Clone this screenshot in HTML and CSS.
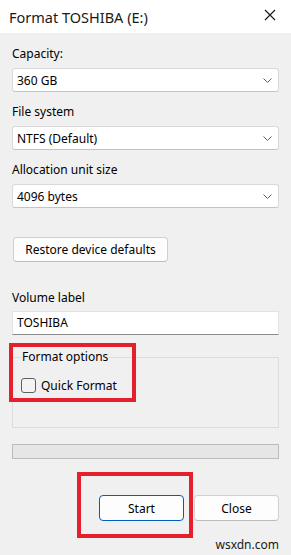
FILE: index.html
```html
<!DOCTYPE html>
<html lang="en">
<head>
    <meta charset="UTF-8">
    <meta name="viewport" content="width=device-width, initial-scale=1.0">
    <title>Format TOSHIBA (E:)</title>
    <link rel="stylesheet" href="styles.css">
</head>
<body>
    <div class="dialog">
        <div class="titlebar">
            <span class="title">Format TOSHIBA (E:)</span>
            <svg class="close" width="12" height="12" viewBox="0 0 12 12">
                <path d="M1 1 L11 11 M11 1 L1 11" stroke="#1a1a1a" stroke-width="1.2" fill="none"/>
            </svg>
        </div>

        <div class="content">
            <div class="field">
                <label>Capacity:</label>
                <div class="combo">
                    <span>360 GB</span>
                    <svg class="chevron" width="9" height="5" viewBox="0 0 9 5"><path d="M0.5 0.5 L4.5 4.5 L8.5 0.5" stroke="#606060" fill="none"/></svg>
                </div>
            </div>
            <div class="field">
                <label>File system</label>
                <div class="combo">
                    <span>NTFS (Default)</span>
                    <svg class="chevron" width="9" height="5" viewBox="0 0 9 5"><path d="M0.5 0.5 L4.5 4.5 L8.5 0.5" stroke="#606060" fill="none"/></svg>
                </div>
            </div>
            <div class="field">
                <label>Allocation unit size</label>
                <div class="combo">
                    <span>4096 bytes</span>
                    <svg class="chevron" width="9" height="5" viewBox="0 0 9 5"><path d="M0.5 0.5 L4.5 4.5 L8.5 0.5" stroke="#606060" fill="none"/></svg>
                </div>
            </div>

            <button class="btn restore">Restore device defaults</button>

            <div class="field volume">
                <label>Volume label</label>
                <div class="textbox">TOSHIBA</div>
            </div>

            <fieldset class="group">
                <legend>Format options</legend>
                <label class="check"><span class="box"></span>Quick Format</label>
            </fieldset>

            <div class="progress"></div>

            <div class="actions">
                <button class="btn default">Start</button>
                <button class="btn">Close</button>
            </div>

            <div class="watermark">wsxdn.com</div>
        </div>

        <div class="mark mark-options"></div>
        <div class="mark mark-start"></div>
    </div>
</body>
</html>
```

FILE: styles.css
```css
body {
    margin: 0;
    padding: 0;
    background-color: #f0f0f0;
    font-family: "Noto Sans", "Open Sans", sans-serif;
    font-size: 12px;
    color: #000;
}
.dialog {
    position: relative;
    width: 291px;
    height: 555px;
    background-color: #f0f0f0;
    overflow: hidden;
}
.titlebar {
    height: 33px;
    background-color: #fff;
    display: flex;
    align-items: center;
    justify-content: space-between;
    padding: 0 15px 0 9px;
}
.title {
    font-size: 14.5px;
    color: #1a1a1a;
}
.close {
    margin-top: -3px;
}
.content {
    padding: 11px 12px 0 12px;
}
.field label {
    display: block;
    line-height: 20px;
    margin-bottom: 4px;
}
.combo {
    height: 24px;
    box-sizing: border-box;
    background-color: #fff;
    border: 1px solid #d9d9d9;
    border-bottom-color: #c4c4c4;
    border-radius: 3px;
    display: flex;
    align-items: center;
    justify-content: space-between;
    padding: 0 6px 0 4px;
    margin-bottom: 10px;
}
.btn {
    font-family: inherit;
    font-size: 12px;
    color: #000;
    background-color: #fdfdfd;
    border: 1px solid #d0d0d0;
    border-bottom-color: #bcbcbc;
    border-radius: 4px;
    padding: 0;
    cursor: pointer;
}
.restore {
    display: block;
    width: 155px;
    height: 25px;
    margin: 29px 0 0 1px;
}
.volume {
    margin-top: 26px;
}
.volume label {
    margin-bottom: 3px;
}
.textbox {
    height: 24px;
    box-sizing: border-box;
    background-color: #fff;
    border: 1px solid #e2e2e2;
    border-bottom: 1px solid #8a8a8a;
    padding: 0 4px;
    line-height: 22px;
}
.group {
    margin: 12px 0 0 0;
    border: 1px solid #dcdcdc;
    padding: 10px 8px 34px 8px;
}
.group legend {
    padding: 0 1px;
    line-height: 20px;
}
.check {
    display: flex;
    align-items: center;
    height: 16px;
    gap: 5px;
}
.check .box {
    width: 15px;
    height: 15px;
    box-sizing: border-box;
    border: 1px solid #5f5f5f;
    border-radius: 3px;
    background-color: #f3f3f3;
}
.progress {
    height: 15px;
    box-sizing: border-box;
    margin-top: 16px;
    background-color: #e6e6e6;
    border: 1px solid #bcbcbc;
}
.actions {
    display: flex;
    justify-content: flex-end;
    gap: 10px;
    margin-top: 36px;
}
.actions .btn {
    width: 85px;
    height: 26px;
}
.actions .default {
    border: 1px solid #005fb8;
}
.watermark {
    text-align: right;
    line-height: 16px;
    margin-top: 16px;
    color: #1a1a1a;
}
.mark {
    position: absolute;
    border: 4px solid #e3202b;
    box-sizing: border-box;
}
.mark-options {
    left: 9px;
    top: 343px;
    width: 127px;
    height: 59px;
}
.mark-start {
    left: 77px;
    top: 472px;
    width: 116px;
    height: 66px;
}
```
